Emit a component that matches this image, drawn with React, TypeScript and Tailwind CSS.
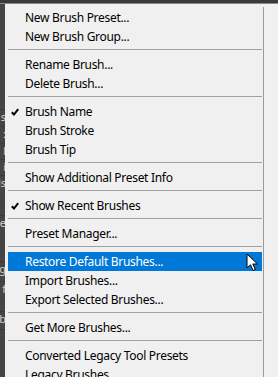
import React from 'react';

type Item = { label: string; checked?: boolean; active?: boolean } | 'sep';

const menuItems: Item[] = [
  { label: 'New Brush Preset...' },
  { label: 'New Brush Group...' },
  'sep',
  { label: 'Rename Brush...' },
  { label: 'Delete Brush...' },
  'sep',
  { label: 'Brush Name', checked: true },
  { label: 'Brush Stroke' },
  { label: 'Brush Tip' },
  'sep',
  { label: 'Show Additional Preset Info' },
  'sep',
  { label: 'Show Recent Brushes', checked: true },
  'sep',
  { label: 'Preset Manager...' },
  'sep',
  { label: 'Restore Default Brushes...', active: true },
  { label: 'Import Brushes...' },
  { label: 'Export Selected Brushes...' },
  'sep',
  { label: 'Get More Brushes...' },
  'sep',
  { label: 'Converted Legacy Tool Presets' },
  { label: 'Legacy Brushes' },
];

// bits of the dark panel peeking out behind the menu
const stripRows = [
  { h: 106, t: '' },
  { h: 17, t: 's' },
  { h: 17, t: ':' },
  { h: 16, t: 'l' },
  { h: 16, t: 'i' },
  { h: 40, t: 'ls' },
  { h: 46, t: 'e' },
  { h: 20, t: 'ig' },
  { h: 30, t: 'f' },
  { h: 18, t: 'b' },
];

function Check() {
  return (
    <svg width="8" height="8" viewBox="0 0 8 8" className="absolute left-[3px] top-[6px]">
      <path d="M0.8 4.2 L3 6.5 L7.2 1.2" fill="none" stroke="#000" strokeWidth="2" />
    </svg>
  );
}

function Cursor() {
  return (
    <svg width="13" height="19" viewBox="0 0 13 19" className="absolute left-[246px] top-[253px]">
      <path
        d="M1 1 L1 15 L4.5 11.8 L7 17.5 L9.3 16.5 L6.9 11 L11.5 11 Z"
        fill="#fff"
        stroke="#000"
        strokeWidth="1"
        strokeLinejoin="round"
      />
    </svg>
  );
}

export default function App() {
  return (
    <div
      className="relative w-[278px] h-[377px] overflow-hidden bg-[#f0f0f0] flex flex-col"
      style={{ fontFamily: '"Noto Sans", "Open Sans", sans-serif' }}
    >
      <div className="h-[4px] bg-[#3a3a3a] border-b border-[#8a8a8a] shrink-0" />
      <div className="flex flex-1 min-h-0">
        <div className="w-[5px] bg-[#454545] flex flex-col overflow-hidden shrink-0">
          {stripRows.map((r, i) => (
            <div
              key={i}
              style={{ height: r.h }}
              className="flex items-start justify-end text-[11px] leading-[14px] text-[#cfcfcf] border-b border-[#3a3a3a] shrink-0"
            >
              <span className="whitespace-nowrap mr-[-1px]">{r.t}</span>
            </div>
          ))}
        </div>
        <div className="w-[258px] pt-[4px] pl-[3px] pr-[1px] flex flex-col">
          {menuItems.map((it, i) =>
            it === 'sep' ? (
              <div key={i} className="h-[9px] pt-[3px] shrink-0">
                <div className="h-px bg-[#a0a0a0]" />
              </div>
            ) : (
              <div
                key={i}
                className={`relative h-[19px] shrink-0 pl-[17px] flex items-center text-[12px] whitespace-nowrap ${
                  it.active ? 'bg-[#0078d7] text-white' : 'text-black'
                }`}
              >
                {it.checked && <Check />}
                <span className="tracking-[-0.3px]">{it.label}</span>
              </div>
            )
          )}
        </div>
        <div className="pt-[3px] flex flex-col">
          <div className="w-px flex-1 bg-[#9a9a9a]" />
        </div>
      </div>
      <Cursor />
    </div>
  );
}
